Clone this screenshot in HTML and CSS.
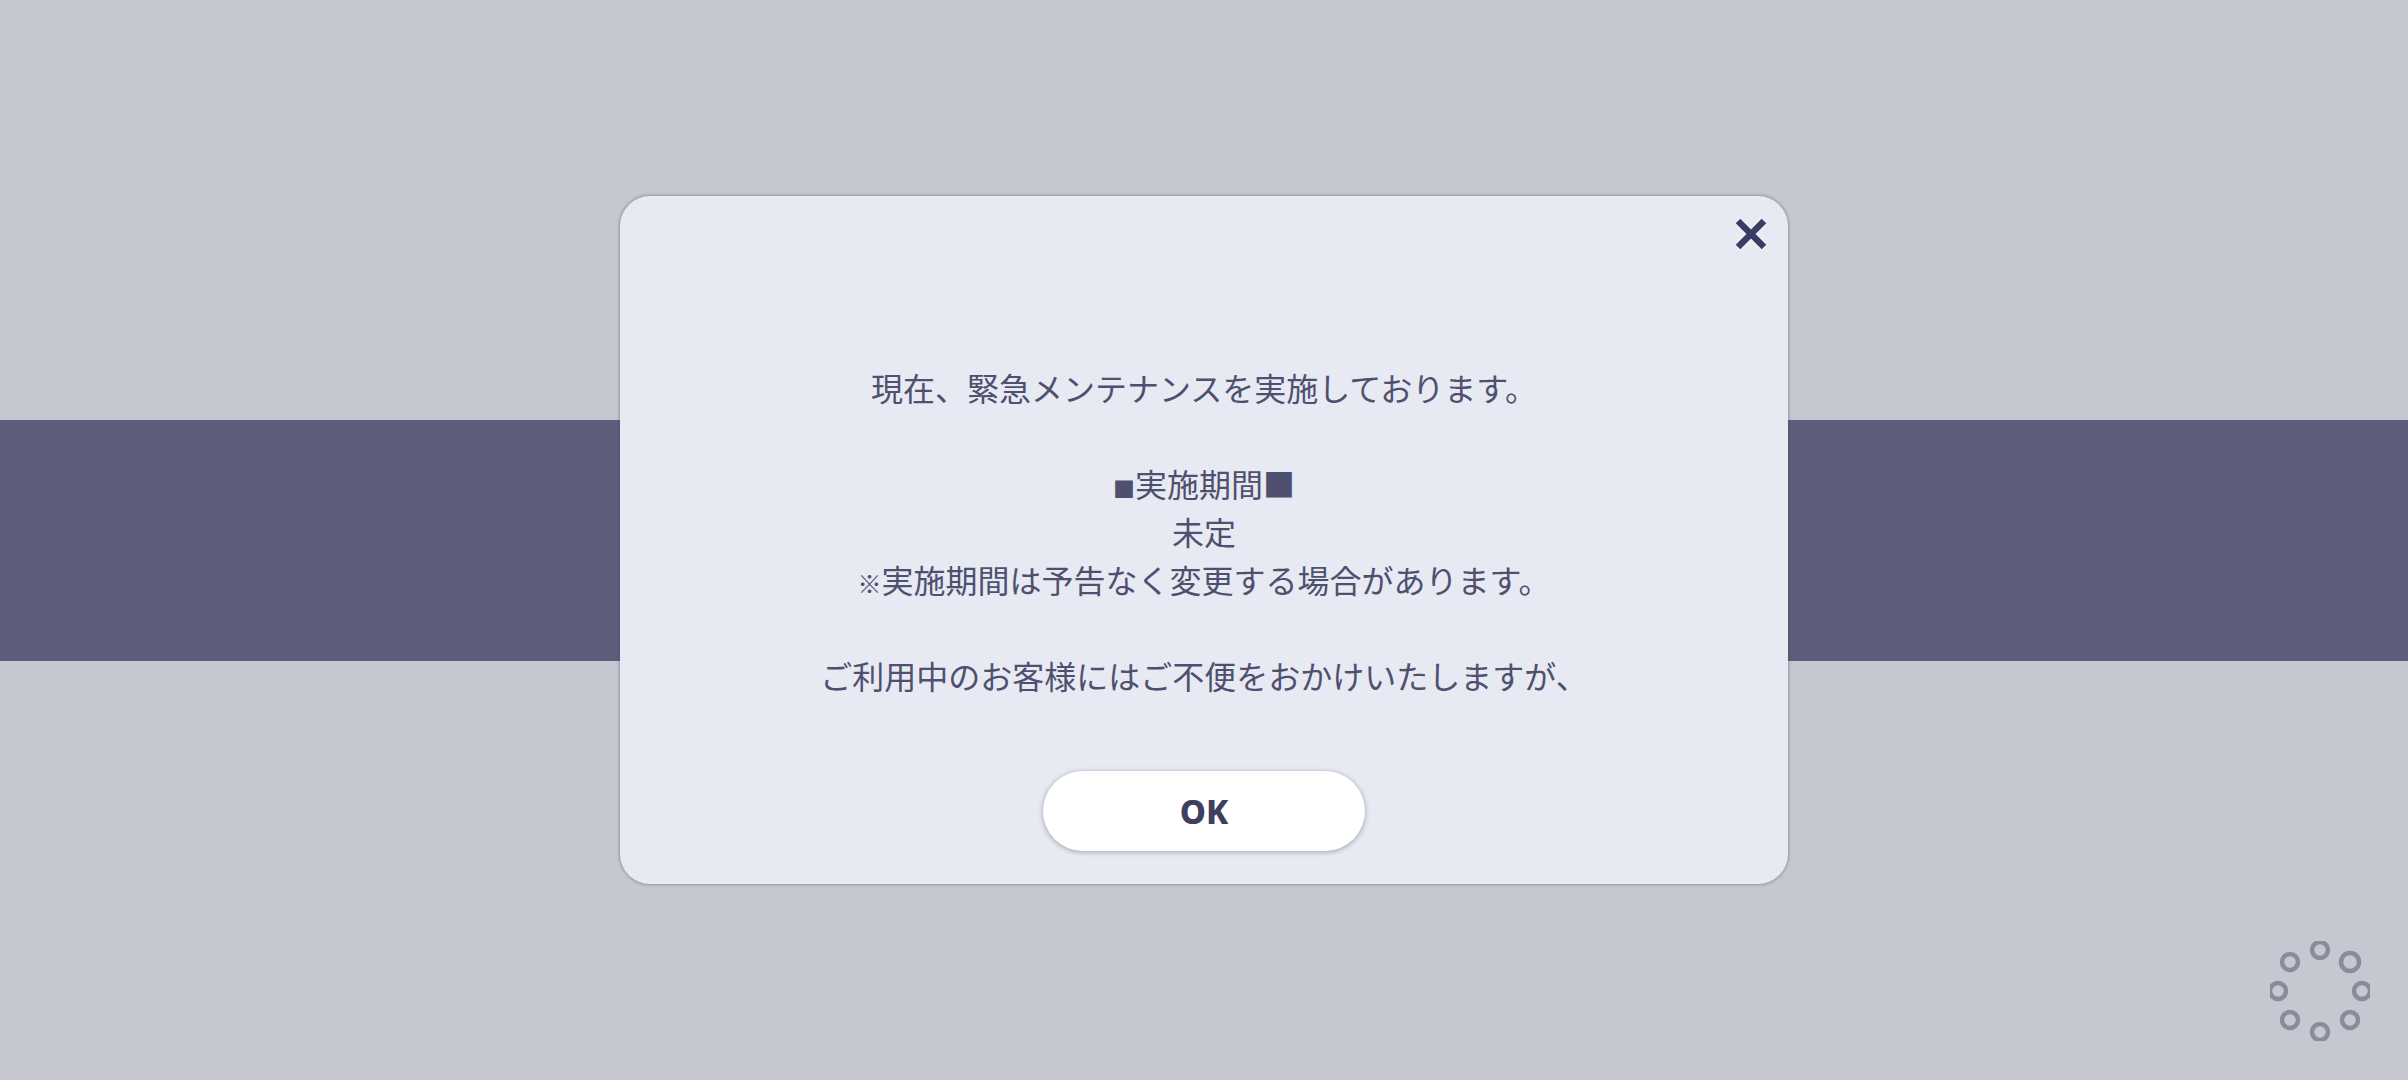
FILE: index.html
```html
<!DOCTYPE html>
<html lang="ja">
  <head>
    <meta charset="utf-8">
    <title>メンテナンス</title>
    <link rel="stylesheet" href="styles.css">
  </head>
  <body>
    <div class="stage">
      <div class="band"></div>

      <div class="dialog">
        <button class="close" aria-label="閉じる">
          <svg width="34" height="34" viewBox="0 0 34 34">
            <path d="M4 4 L30 30 M30 4 L4 30" stroke="#3b3c63" stroke-width="6.5" fill="none"/>
          </svg>
        </button>

        <div class="message">
          <p>現在、緊急メンテナンスを実施しております。</p>
          <p>&nbsp;</p>
          <p><span class="mark-small">■</span>実施期間■</p>
          <p>未定</p>
          <p><span class="note">※</span>実施期間は予告なく変更する場合があります。</p>
          <p>&nbsp;</p>
          <p>ご利用中のお客様にはご不便をおかけいたしますが、</p>
        </div>

        <button class="ok">OK</button>
      </div>
    </div>

    <svg class="loader" width="100" height="100" viewBox="0 0 100 100">
      <circle cx="50" cy="9" r="8"/>
      <circle cx="80" cy="21" r="9"/>
      <circle cx="92" cy="50" r="8"/>
      <circle cx="80" cy="79" r="8"/>
      <circle cx="50" cy="91" r="8"/>
      <circle cx="20" cy="79" r="8"/>
      <circle cx="8" cy="50" r="8"/>
      <circle cx="20" cy="21" r="8"/>
    </svg>
  </body>
</html>
```

FILE: styles.css
```css
html, body {
  margin: 0;
  height: 100%;
}
body {
  background-color: #c5c8d1;
  font-family: "Noto Sans CJK JP", "Noto Sans", sans-serif;
  color: #4f506f;
  overflow: hidden;
}
.stage {
  height: 1080px;
  display: grid;
  align-items: center;
  justify-items: center;
}
.band {
  grid-area: 1 / 1;
  width: 100%;
  height: 241px;
  background-color: #5d5c7b;
}
.dialog {
  grid-area: 1 / 1;
  position: relative;
  width: 1168px;
  height: 688px;
  box-sizing: border-box;
  padding: 167px 0 31px;
  background-color: #e7eaf2;
  border-radius: 30px;
  box-shadow: 0 0 3px 1px rgba(70, 72, 95, 0.4);
  display: flex;
  flex-direction: column;
  align-items: center;
}
.close {
  position: absolute;
  top: 21px;
  right: 20px;
  padding: 0;
  border: 0;
  background: none;
  line-height: 0;
  filter: drop-shadow(0 0 2px rgba(255, 255, 255, 0.8));
}
.message {
  text-align: center;
  font-size: 32px;
  line-height: 48px;
}
.message p {
  margin: 0;
}
.mark-small {
  font-size: 22px;
  line-height: 1;
}
.note {
  font-size: 24px;
  line-height: 1;
}
.ok {
  margin-top: 72px;
  width: 322px;
  height: 80px;
  border: 0;
  border-radius: 40px;
  background-color: #ffffff;
  box-shadow: 0 1px 4px 1px rgba(60, 60, 80, 0.3);
  font-family: "Noto Sans", sans-serif;
  font-weight: 800;
  font-size: 33px;
  color: #3e3f5e;
  padding: 0;
}
.loader {
  position: absolute;
  right: 38px;
  bottom: 39px;
}
.loader circle {
  fill: none;
  stroke: #8a8c99;
  stroke-width: 4.5;
}
```
